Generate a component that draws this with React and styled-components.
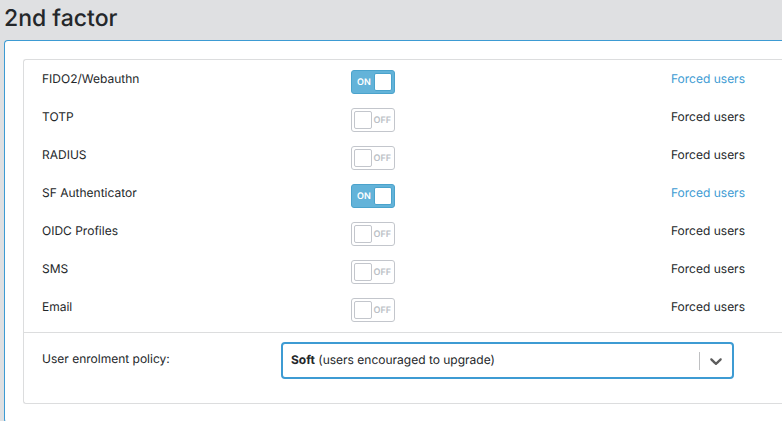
import React, { useState } from "react";
import styled, { createGlobalStyle } from "styled-components";

const GlobalStyle = createGlobalStyle`
  *, *::before, *::after { box-sizing: border-box; }
  body {
    margin: 0;
    background: #dfe0e2;
    color: #24272a;
    font: 12px/20px Inter, "Liberation Sans", sans-serif;
    text-rendering: geometricPrecision;
  }
`;

const Page = styled.main`
  display: flex;
  flex-direction: column;
  height: 100vh;
  overflow: hidden;
  padding-left: 4px;
`;

const Title = styled.h1`
  flex: none;
  margin: 0;
  padding: 2px 0 6px;
  font-size: 23px;
  line-height: 32px;
  font-weight: 500;
`;

const Panel = styled.section`
  flex: none;
  padding: 18px 0 18px 18px;
  background: #fff;
  border: 1px solid #3d9bd3;
  border-right: 0;
  border-radius: 4px 0 0 4px;
`;

const Card = styled.form`
  border: 1px solid #dcddde;
  border-right: 0;
  border-radius: 3px 0 0 3px;
`;

const FactorList = styled.ul`
  list-style: none;
  margin: 0;
  padding: 3px 0 3px 18px;
`;

const FactorRow = styled.li`
  display: grid;
  grid-template-columns: 309px 320px 1fr;
  align-items: start;
  height: 38px;
  padding-top: 7px;
  line-height: 18px;
`;

const Switch = styled.label`
  position: relative;
  display: flex;
  flex-direction: ${(p) => (p.$on ? "row" : "row-reverse")};
  align-items: center;
  justify-content: space-between;
  width: 44px;
  height: 24px;
  padding: 2px ${(p) => (p.$on ? 2 : 3)}px 2px ${(p) => (p.$on ? 5 : 2)}px;
  border: 1px solid ${(p) => (p.$on ? "#4ba3cc" : "#c3c6cc")};
  border-radius: 3px;
  background: ${(p) => (p.$on ? "#63b3d9" : "#fff")};
  color: ${(p) => (p.$on ? "#fff" : "#bbbfc6")};
  font-size: 9px;
  line-height: 12px;
  font-weight: 600;
  cursor: pointer;
`;

const SwitchInput = styled.input`
  position: absolute;
  inset: 0;
  width: 100%;
  height: 100%;
  margin: 0;
  opacity: 0;
  cursor: pointer;
`;

const SwitchText = styled.span`
  padding-top: 2px;
`;

const Knob = styled.span`
  width: 18px;
  height: 18px;
  background: #fff;
  border: 1px solid ${(p) => (p.$on ? "#4ba3cc" : "#c3c6cc")};
  border-radius: 2px;
`;

const ForcedLink = styled.a`
  justify-self: start;
  color: ${(p) => (p.$on ? "#3d9bd3" : "inherit")};
  text-decoration: none;
`;

const Policy = styled.div`
  display: grid;
  grid-template-columns: 239px 1fr;
  align-items: start;
  padding: 9px 48px 24px 18px;
  border-top: 1px solid #dcddde;
`;

const PolicyLabel = styled.label`
  padding-top: 7px;
`;

const SelectBox = styled.div`
  position: relative;
  display: flex;
  align-items: center;
  height: 37px;
  border: 2px solid #3d9bd3;
  border-radius: 4px;
  background: #fff;
`;

const SelectValue = styled.span`
  flex: 1;
  padding: 0 0 2px 8px;
`;

const Separator = styled.span`
  width: 1px;
  height: 18px;
  background: #bfc0c2;
`;

const Chevron = styled.svg`
  width: 20px;
  height: 20px;
  margin: 0 6px;
  fill: #5c5c5c;
`;

const NativeSelect = styled.select`
  position: absolute;
  inset: 0;
  width: 100%;
  height: 100%;
  opacity: 0;
  cursor: pointer;
`;

const initialFactors = [
  { id: "fido2", name: "FIDO2/Webauthn", on: true },
  { id: "totp", name: "TOTP", on: false },
  { id: "radius", name: "RADIUS", on: false },
  { id: "sf", name: "SF Authenticator", on: true },
  { id: "oidc", name: "OIDC Profiles", on: false },
  { id: "sms", name: "SMS", on: false },
  { id: "email", name: "Email", on: false },
];

function Toggle({ on, labelledBy, onChange }) {
  return (
    <Switch $on={on}>
      <SwitchInput
        type="checkbox"
        role="switch"
        checked={on}
        onChange={onChange}
        aria-labelledby={labelledBy}
      />
      <SwitchText>{on ? "ON" : "OFF"}</SwitchText>
      <Knob $on={on} />
    </Switch>
  );
}

export default function App() {
  const [factors, setFactors] = useState(initialFactors);
  const toggle = (id) =>
    setFactors((list) => list.map((f) => (f.id === id ? { ...f, on: !f.on } : f)));

  return (
    <>
      <GlobalStyle />
      <Page>
        <Title>2nd factor</Title>
        <Panel>
          <Card>
            <FactorList>
              {factors.map((f) => (
                <FactorRow key={f.id}>
                  <span id={f.id}>{f.name}</span>
                  <Toggle on={f.on} labelledBy={f.id} onChange={() => toggle(f.id)} />
                  <ForcedLink $on={f.on} href={`#${f.id}`}>
                    Forced users
                  </ForcedLink>
                </FactorRow>
              ))}
            </FactorList>
            <Policy>
              <PolicyLabel htmlFor="policy">User enrolment policy:</PolicyLabel>
              <SelectBox>
                <SelectValue aria-hidden="true">
                  <b>Soft</b> (users encouraged to upgrade)
                </SelectValue>
                <Separator />
                <Chevron viewBox="0 0 20 20" aria-hidden="true">
                  <path d="M4.516 7.548c0.436-0.446 1.043-0.481 1.576 0l3.908 3.747 3.908-3.747c0.533-0.481 1.141-0.446 1.574 0 0.436 0.445 0.408 1.197 0 1.615-0.406 0.418-4.695 4.502-4.695 4.502-0.217 0.223-0.502 0.335-0.787 0.335s-0.57-0.112-0.789-0.335c0 0-4.287-4.084-4.695-4.502s-0.436-1.17 0-1.615z" />
                </Chevron>
                <NativeSelect id="policy" defaultValue="soft">
                  <option value="soft">Soft (users encouraged to upgrade)</option>
                </NativeSelect>
              </SelectBox>
            </Policy>
          </Card>
        </Panel>
      </Page>
    </>
  );
}
